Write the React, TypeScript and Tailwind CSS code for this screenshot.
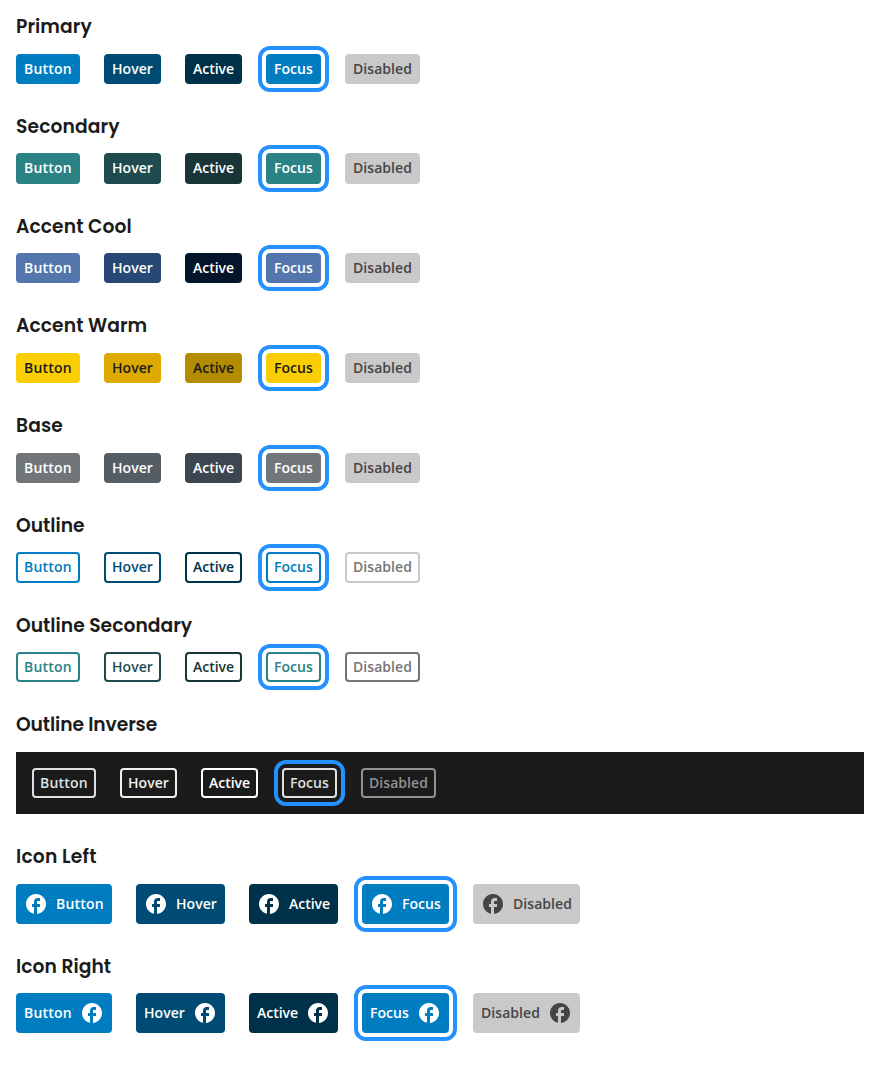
const states = [
  { label: "Button", width: "w-16", iconWidth: "w-24", tracking: "tracking-[0.2px]" },
  { label: "Hover", width: "w-[57px]", iconWidth: "w-[89px]", tracking: "tracking-[0.06px]" },
  { label: "Active", width: "w-[57px]", iconWidth: "w-[89px]", tracking: "tracking-[-0.02px]" },
  { label: "Focus", width: "w-[55px]", iconWidth: "w-[87px]", tracking: "tracking-[0.04px]" },
  { label: "Disabled", width: "w-[75px]", iconWidth: "w-[107px]", tracking: "tracking-[0.05px]" },
];

const disabled = "bg-[#c9c9c9] text-[#454545]";
const primary = [
  "bg-[#007dc0] text-white",
  "bg-[#004b73] text-white",
  "bg-[#00314a] text-white",
  "bg-[#007dc0] text-white",
  disabled,
];

type Group = {
  title: string;
  tracking: string;
  styles: string[];
  inverse?: boolean;
  icon?: "left" | "right";
};

const groups: Group[] = [
  { title: "Primary", tracking: "tracking-[0.08px]", styles: primary },
  {
    title: "Secondary",
    tracking: "tracking-[0.1px]",
    styles: [
      "bg-[#2a8285] text-white",
      "bg-[#1f4b4f] text-white",
      "bg-[#193538] text-white",
      "bg-[#2a8285] text-white",
      disabled,
    ],
  },
  {
    title: "Accent Cool",
    tracking: "tracking-[0.07px]",
    styles: [
      "bg-[#5377ad] text-white",
      "bg-[#274774] text-white",
      "bg-[#04142b] text-white",
      "bg-[#5377ad] text-white",
      disabled,
    ],
  },
  {
    title: "Accent Warm",
    tracking: "tracking-[0.07px]",
    styles: [
      "bg-[#face00] text-[#1b1b1b]",
      "bg-[#ddaa01] text-[#1b1b1b]",
      "bg-[#b38c00] text-[#1b1b1b]",
      "bg-[#face00] text-[#1b1b1b]",
      disabled,
    ],
  },
  {
    title: "Base",
    tracking: "tracking-[0.15px]",
    styles: [
      "bg-[#71767a] text-white",
      "bg-[#565c65] text-white",
      "bg-[#3d4551] text-white",
      "bg-[#71767a] text-white",
      disabled,
    ],
  },
  {
    title: "Outline",
    tracking: "tracking-normal",
    styles: [
      "inset-ring-2 inset-ring-[#007dc0] text-[#007dc0]",
      "inset-ring-2 inset-ring-[#004b73] text-[#004b73]",
      "inset-ring-2 inset-ring-[#00314a] text-[#00314a]",
      "inset-ring-2 inset-ring-[#007dc0] text-[#007dc0]",
      "inset-ring-2 inset-ring-[#c9c9c9] text-[#757575]",
    ],
  },
  {
    title: "Outline Secondary",
    tracking: "tracking-[0.02px]",
    styles: [
      "inset-ring-2 inset-ring-[#2a8285] text-[#2a8285]",
      "inset-ring-2 inset-ring-[#1f4b4f] text-[#1f4b4f]",
      "inset-ring-2 inset-ring-[#193538] text-[#193538]",
      "inset-ring-2 inset-ring-[#2a8285] text-[#2a8285]",
      "inset-ring-2 inset-ring-[#757575] text-[#757575]",
    ],
  },
  {
    title: "Outline Inverse",
    tracking: "tracking-[-0.1px]",
    inverse: true,
    styles: [
      "inset-ring-2 inset-ring-[#dfe1e2] text-[#dfe1e2]",
      "inset-ring-2 inset-ring-[#f0f0f0] text-[#f0f0f0]",
      "inset-ring-2 inset-ring-white text-white",
      "inset-ring-2 inset-ring-[#dfe1e2] text-[#dfe1e2]",
      "inset-ring-2 inset-ring-[#919191] text-[#919191]",
    ],
  },
  { title: "Icon Left", tracking: "tracking-[0.18px]", styles: primary, icon: "left" },
  { title: "Icon Right", tracking: "tracking-[0.04px]", styles: primary, icon: "right" },
];

function FacebookIcon() {
  return (
    <svg viewBox="0 0 24 24" className="size-6 shrink-0" fill="currentColor" aria-hidden="true">
      <path d="M22 12c0-5.52-4.48-10-10-10S2 6.48 2 12c0 4.84 3.44 8.87 8 9.8V15H8v-3h2V9.5C10 7.57 11.57 6 13.5 6H16v3h-2c-.55 0-1 .45-1 1v2h3v3h-3v6.95c5.05-.5 9-4.76 9-9.95z" />
    </svg>
  );
}

type ButtonProps = { state: (typeof states)[number]; color: string; icon?: "left" | "right" };

function Button({ state, color, icon }: ButtonProps) {
  const focus = state.label === "Focus" ? "outline-4 outline-offset-4 outline-[#2491ff]" : "";
  return (
    <button
      type="button"
      className={`flex items-center gap-2 rounded-[4px] p-2 font-['Open_Sans',sans-serif] text-[14px] leading-[14.24px] font-semibold whitespace-nowrap ${
        icon ? state.iconWidth : state.width
      } ${state.tracking} ${focus} ${color}`}
    >
      {icon === "left" && <FacebookIcon />}
      <span className={`grow text-left ${icon === "left" ? "pt-px" : ""}`}>{state.label}</span>
      {icon === "right" && <FacebookIcon />}
    </button>
  );
}

export default function App() {
  return (
    <main className="bg-white px-4 pt-[11.22px] text-[#1b1b1b]">
      {groups.map((g) => (
        <section key={g.title} className="mb-[27.13px]">
          <h2
            className={`mb-[11.4px] h-[31px] font-['Poppins',sans-serif] text-[18.72px] leading-[31px] font-semibold ${g.tracking}`}
          >
            {g.title}
          </h2>
          <div className={`flex items-start gap-6 ${g.inverse ? "bg-[#1b1b1b] p-4" : ""}`}>
            {states.map((s, i) => (
              <Button key={s.label} state={s} color={g.styles[i]} icon={g.icon} />
            ))}
          </div>
        </section>
      ))}
    </main>
  );
}
